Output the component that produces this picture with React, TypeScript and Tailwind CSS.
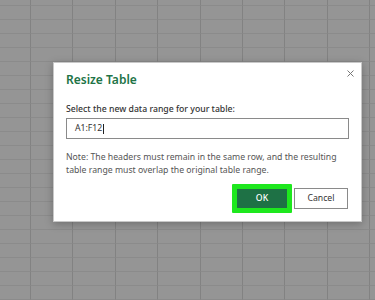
import React from "react";

const COLS = 10;
const ROWS = 22;

export default function App() {
  const cells = Array.from({ length: COLS * ROWS });
  return (
    <div
      className="relative w-[375px] h-[300px] overflow-hidden bg-[#959595]"
      style={{ fontFamily: '"Noto Sans", "Open Sans", sans-serif' }}
    >
      <div className="grid grid-cols-[31px_repeat(9,42.4px)] grid-rows-[6px_repeat(21,14px)]">
        {cells.map((_, i) => (
          <div
            key={i}
            className="border-r border-b border-r-[#828282] border-b-[#8b8b8b]"
          />
        ))}
      </div>

      <div className="absolute left-[53px] top-[62px] w-[309px] h-[160px] bg-white border border-[#c8c8c8] shadow-[0_2px_8px_rgba(0,0,0,0.25)] flex flex-col px-[12px] pt-[9px]">
        <svg
          className="absolute right-[7px] top-[7px]"
          width="7"
          height="7"
          viewBox="0 0 7 7"
        >
          <path d="M0.5 0.5L6.5 6.5M6.5 0.5L0.5 6.5" stroke="#777" strokeWidth="1" />
        </svg>
        <div className="text-[12px] leading-[16px] font-semibold text-[#217346]">
          Resize Table
        </div>
        <div className="mt-[15px] text-[8.7px] leading-[12px] font-medium text-[#333]">
          Select the new data range for your table:
        </div>
        <div className="mt-[3px] h-[21px] border border-[#8a8a8a] flex items-center pl-[8px] text-[8.7px] text-[#333]">
          A1:F12
          <span className="inline-block w-[1px] h-[10px] bg-[#222] ml-[1px]" />
        </div>
        <div className="mt-[12px] text-[8.7px] leading-[13px] text-[#555]">
          Note: The headers must remain in the same row, and the resulting table range must overlap the original table range.
        </div>
        <div className="mt-[7px] flex items-center justify-end gap-[2px] pr-[1px]">
          <div className="w-[60px] h-[29px] bg-[#1ee81e] p-[5px] rounded-[1px]">
            <div className="w-full h-full bg-[#1e7145] flex items-center justify-center text-white text-[8.7px] font-medium">
              OK
            </div>
          </div>
          <div className="w-[54px] h-[21px] border border-[#8a8a8a] bg-white flex items-center justify-center text-[8.7px] text-[#333]">
            Cancel
          </div>
        </div>
      </div>
    </div>
  );
}
